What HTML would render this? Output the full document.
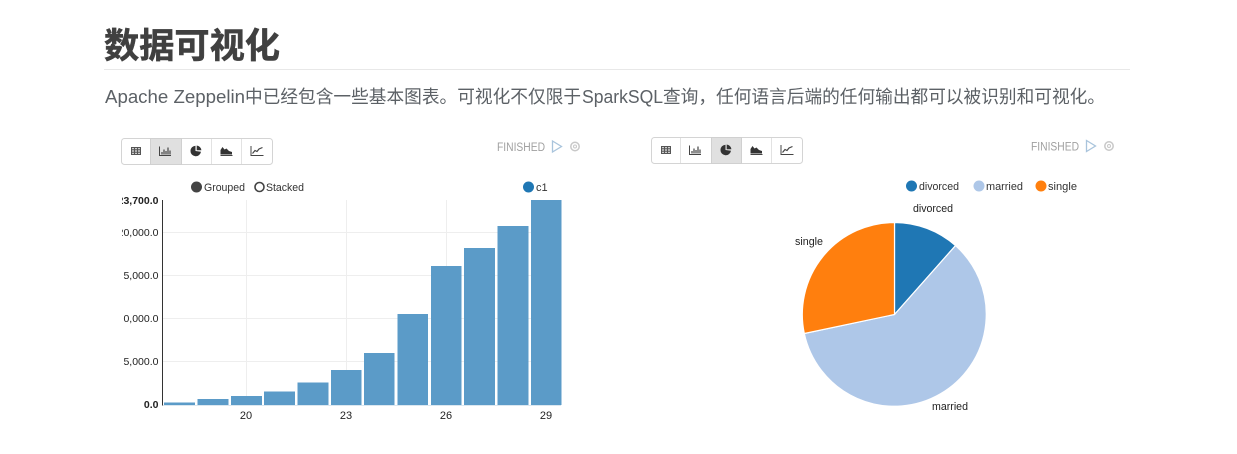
<!DOCTYPE html>
<html lang="zh">
<head>
<meta charset="utf-8">
<title>数据可视化</title>
<style>
html,body{margin:0;padding:0;background:#fff;}
body{width:1237px;height:454px;overflow:hidden;position:relative;}
svg{position:absolute;left:0;top:0;}
text{font-family:"Liberation Sans","Noto Sans CJK SC",sans-serif;}
</style>
</head>
<body>
<svg width="1237" height="454" viewBox="0 0 1237 454" xmlns="http://www.w3.org/2000/svg">
<defs>
<g id="i-table" fill="none" stroke="#555" stroke-width="1">
  <rect x="-4.5" y="-3.5" width="9" height="7" fill="#ccc"/>
  <path d="M-4.5 -1.200H4.500M-4.500 1.200H4.500M-1.500 -3.500V3.500M1.500 -3.500V3.500"/>
</g>
<g id="i-bar" fill="none" stroke="#444" stroke-width="1">
  <path d="M-5.500 -4.500V4.500H6"/>
  <path d="M-3 3.500V1M-1 3.500V-1.500M1 3.500V0M3 3.500V-3.500M5 3.500V-0.500" stroke-width="1.200"/>
</g>
<g id="i-pie">
  <path d="M-0.500 -5.300A5.300 5.300 0 1 0 5 0.800L-0.500 0Z" fill="#333"/>
  <path d="M0.700 -5.500A5.300 5.300 0 0 1 5.400 -0.800L0.700 -0.800Z" fill="#333"/>
</g>
<g id="i-area">
  <path d="M-5.500 4.500H6.500" fill="none" stroke="#444" stroke-width="1"/>
  <path d="M-5.500 3.500V-1L-3.500 -4L-1.500 -1.500L0.500 -2.500L3 0L6 1V3.500Z" fill="#333"/>
</g>
<g id="i-line" fill="none" stroke="#444" stroke-width="1">
  <path d="M-6 -5V4.500H6.500"/>
  <path d="M-4.500 2.500L-2 -0.500L0 0.500L2 -2L5.500 -3.500" stroke-width="1.200"/>
</g>
<g id="toolbar">
  <rect x="0.500" y="0.500" width="151" height="26" rx="3" fill="#fff" stroke="#d4d4d4"/>
  <path d="M29.500 1V26M60.500 1V26M90.500 1V26M120.500 1V26" stroke="#e2e2e2"/>
  <use href="#i-table" x="15" y="13"/>
  <use href="#i-bar" x="44" y="13"/>
  <use href="#i-pie" x="75" y="13"/>
  <use href="#i-area" x="105" y="13"/>
  <use href="#i-line" x="136" y="13"/>
</g>
<g id="status">
  <text x="0" y="4.500" font-size="11.500" fill="#a0a0a0" textLength="48" lengthAdjust="spacingAndGlyphs">FINISHED</text>
  <path d="M55.500 -5.500L64.500 0L55.500 5.500Z" fill="none" stroke="#a9c4dc" stroke-width="1.300"/>
  <circle cx="78" cy="0" r="4.200" fill="none" stroke="#c8c8c8" stroke-width="1.500"/>
  <circle cx="78" cy="0" r="1.500" fill="none" stroke="#c8c8c8" stroke-width="1"/>
</g>
</defs>

<!-- Heading -->
<text x="104" y="58" font-size="35" font-weight="700" fill="#404040" stroke="#404040" stroke-width="0.500" textLength="176" lengthAdjust="spacingAndGlyphs">数据可视化</text>
<rect x="104" y="69" width="1026" height="1" fill="#e8e8e8"/>

<!-- Intro paragraph -->
<g font-size="18" fill="#5c6166">
  <text x="105" y="103" textLength="140" lengthAdjust="spacingAndGlyphs">Apache Zeppelin</text>
  <text x="245" y="103" textLength="336" lengthAdjust="spacingAndGlyphs">中已经包含一些基本图表。可视化不仅限于</text>
  <text x="582" y="103" textLength="81" lengthAdjust="spacingAndGlyphs">SparkSQL</text>
  <text x="663" y="103" textLength="442" lengthAdjust="spacingAndGlyphs">查询，任何语言后端的任何输出都可以被识别和可视化。</text>
</g>

<!-- Left toolbar -->
<g transform="translate(121,138)">
  <use href="#toolbar"/>
  <rect x="29.500" y="0.500" width="31" height="26" fill="#e0e0e0" stroke="#d0d0d0"/>
  <use href="#i-bar" x="44" y="13"/>
</g>
<use href="#status" x="497" y="146.500"/>

<!-- Right toolbar -->
<g transform="translate(651,137)">
  <use href="#toolbar"/>
  <rect x="60.500" y="0.500" width="30" height="26" fill="#e0e0e0" stroke="#d0d0d0"/>
  <use href="#i-pie" x="75" y="13"/>
</g>
<use href="#status" x="1031" y="146"/>

<!-- Bar chart legend -->
<circle cx="196.500" cy="187" r="5.500" fill="#444"/>
<text x="204" y="191" font-size="11" fill="#333" textLength="41" lengthAdjust="spacingAndGlyphs">Grouped</text>
<circle cx="259.500" cy="187" r="4.500" fill="#fff" stroke="#444" stroke-width="1.600"/>
<text x="266" y="191" font-size="11" fill="#333" textLength="38" lengthAdjust="spacingAndGlyphs">Stacked</text>
<circle cx="528.500" cy="187" r="5.500" fill="#1f77b4"/>
<text x="536" y="191" font-size="11" fill="#333">c1</text>

<!-- Bar chart grid -->
<path d="M163 232.500H561M163 275.500H561M163 318.500H561M163 361.500H561M246.500 200V405M346.500 200V405M446.500 200V405M546.500 200V405" stroke="#eeeeee" fill="none"/>

<!-- Bars -->
<g fill="#5b9bc8">
  <rect x="164" y="402.500" width="31" height="2.500"/>
  <rect x="197.500" y="399" width="31" height="6"/>
  <rect x="231" y="396" width="31" height="9"/>
  <rect x="264" y="391.500" width="31" height="13.500"/>
  <rect x="297.500" y="382.500" width="31" height="22.500"/>
  <rect x="331" y="370" width="30.500" height="35"/>
  <rect x="364" y="353" width="30.500" height="52"/>
  <rect x="397.500" y="314" width="30.500" height="91"/>
  <rect x="431" y="266" width="30.500" height="139"/>
  <rect x="464" y="248" width="31" height="157"/>
  <rect x="497.500" y="226" width="31" height="179"/>
  <rect x="531" y="200" width="30.500" height="205"/>
</g>

<!-- Axes -->
<path d="M163 405.500H561" stroke="#dbe7f0" fill="none"/>
<path d="M162.500 200V405.500" stroke="#333" fill="none"/>

<!-- Y labels -->
<g font-size="10.500" fill="#222" text-anchor="end">
  <text x="158.500" y="204" font-weight="700">23,700.0</text>
  <text x="158.500" y="236">20,000.0</text>
  <text x="158.500" y="279">15,000.0</text>
  <text x="158.500" y="322">10,000.0</text>
  <text x="158.500" y="365">5,000.0</text>
  <text x="158.500" y="408" font-weight="700">0.0</text>
</g>
<rect x="100" y="195" width="22" height="135" fill="#fff"/>
<rect x="100" y="268" width="23.500" height="60" fill="#fff"/>

<!-- X labels -->
<g font-size="11" fill="#222" text-anchor="middle">
  <text x="246" y="419">20</text>
  <text x="346" y="419">23</text>
  <text x="446" y="419">26</text>
  <text x="546" y="419">29</text>
</g>

<!-- Pie legend -->
<circle cx="911.500" cy="186" r="5.500" fill="#1f77b4"/>
<text x="919" y="190" font-size="11" fill="#333" textLength="40" lengthAdjust="spacingAndGlyphs">divorced</text>
<circle cx="979" cy="186" r="5.500" fill="#aec7e8"/>
<text x="986" y="190" font-size="11" fill="#333" textLength="37" lengthAdjust="spacingAndGlyphs">married</text>
<circle cx="1041" cy="186" r="5.500" fill="#ff7f0e"/>
<text x="1048" y="190" font-size="11" fill="#333" textLength="29" lengthAdjust="spacingAndGlyphs">single</text>

<!-- Pie -->
<g stroke="#fff" stroke-width="1.200">
  <path d="M894.500 314.500L894.500 222.500A92 92 0 0 1 955.500 245.600Z" fill="#1f77b4"/>
  <path d="M894.500 314.500L955.500 245.600A92 92 0 1 1 804.300 333.500Z" fill="#aec7e8"/>
  <path d="M894.500 314.500L804.300 333.500A92 92 0 0 1 894.500 222.500Z" fill="#ff7f0e"/>
</g>
<text x="913" y="212" font-size="11" fill="#222" textLength="40" lengthAdjust="spacingAndGlyphs">divorced</text>
<text x="795" y="245" font-size="11" fill="#222" textLength="28" lengthAdjust="spacingAndGlyphs">single</text>
<text x="932" y="410" font-size="11" fill="#222" textLength="36" lengthAdjust="spacingAndGlyphs">married</text>
</svg>
</body>
</html>
